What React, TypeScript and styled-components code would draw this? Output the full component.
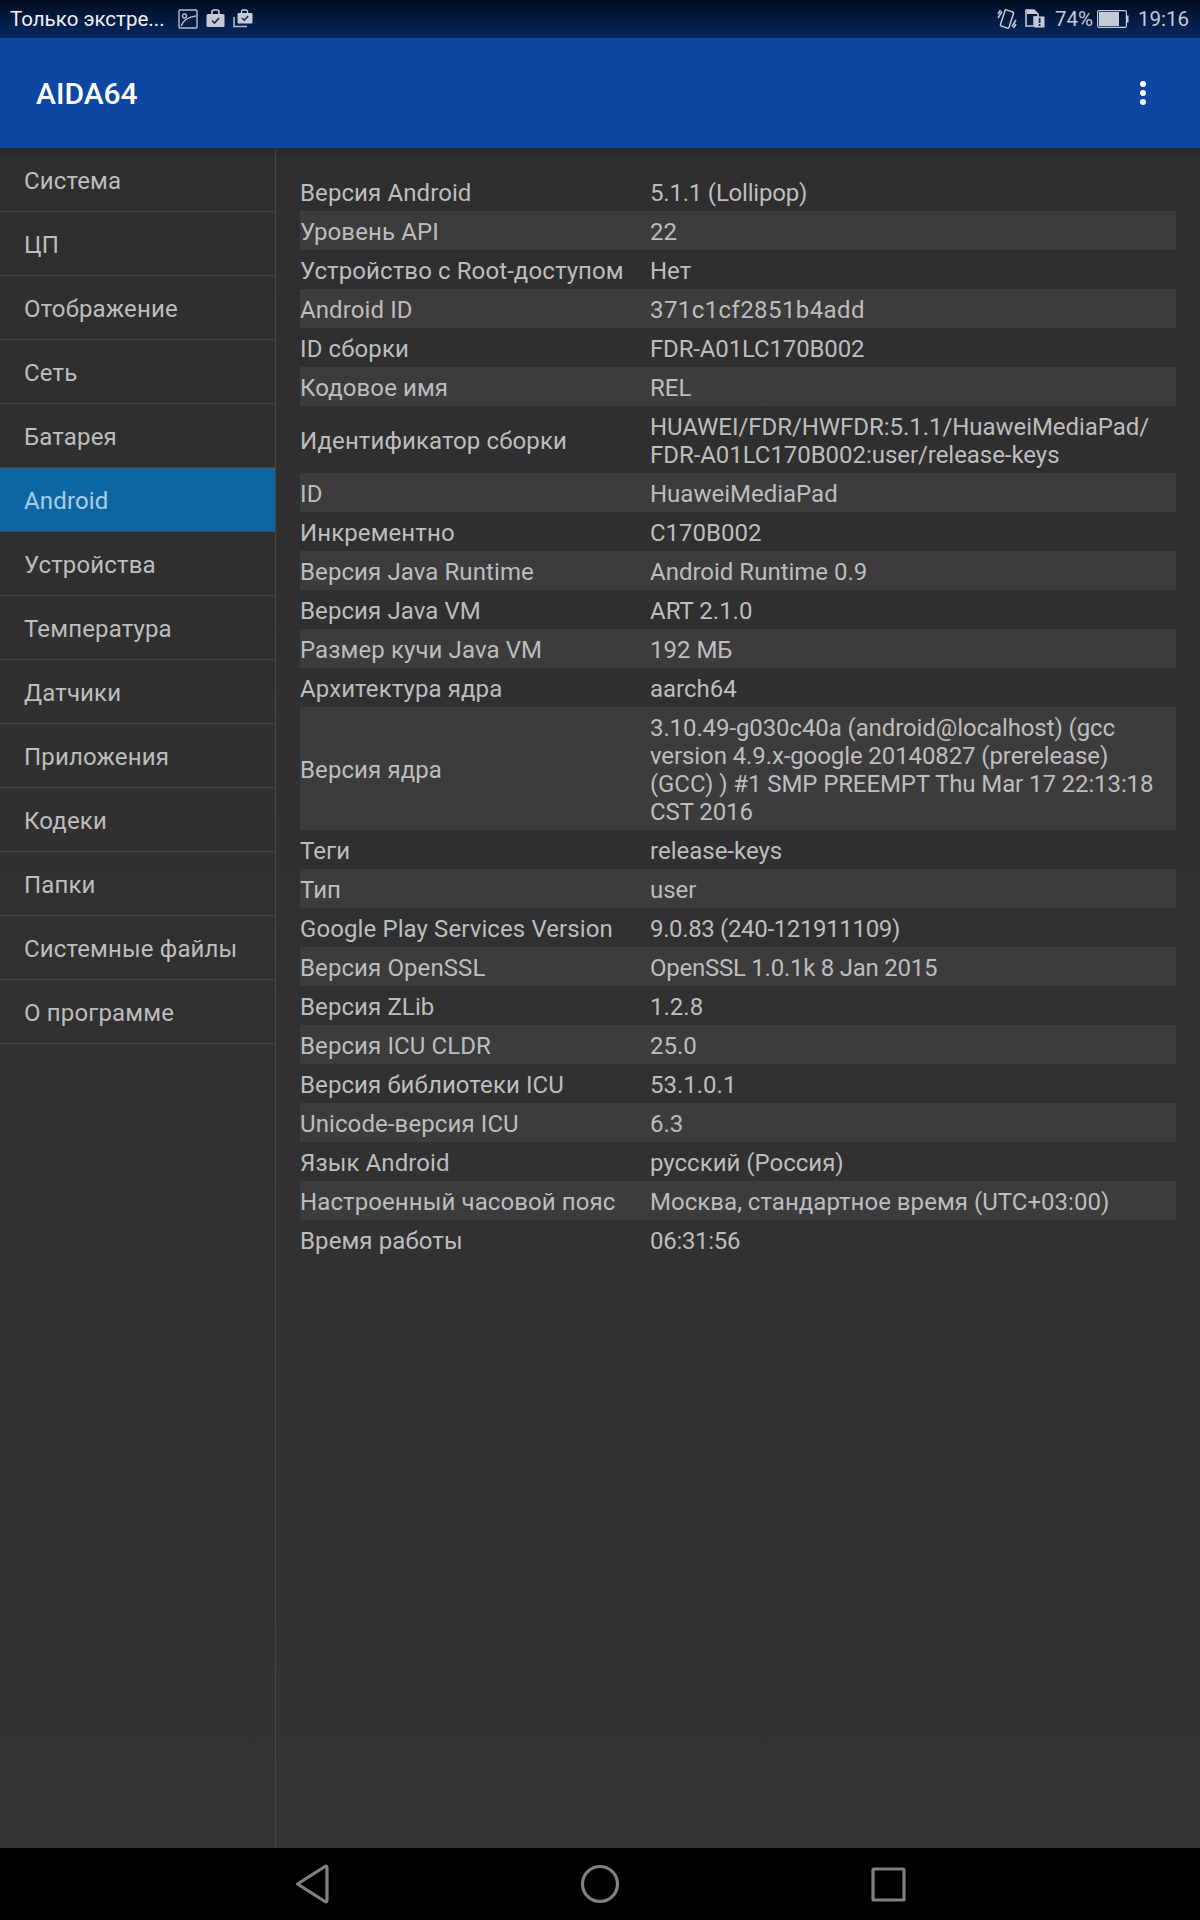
import { createGlobalStyle } from 'styled-components'
import styled from 'styled-components'

const GlobalStyle = createGlobalStyle`
    html, body {
        margin: 0;
        padding: 0;
        background: #303030;
    }
    * {
        box-sizing: border-box;
    }
`

const Page = styled.div`
    display: flex;
    flex-flow: column;
    width: 1200px;
    height: 1920px;
    font-family: Roboto, "Noto Sans", sans-serif;
    background: linear-gradient(#2e2e2e, #333333);
    overflow: hidden;
`

const StatusBar = styled.div`
    display: flex;
    align-items: center;
    height: 38px;
    padding: 0 10px;
    background: linear-gradient(#010c20, #072863);
    color: #c5cad6;
    font-size: 20.5px;
    flex: none;
`

const StatusTitle = styled.div`
    color: #eef0f4;
    margin-right: 13px;
`

const StatusIcons = styled.div`
    display: flex;
    align-items: center;
    gap: 8px;
`

const StatusRight = styled.div`
    display: flex;
    align-items: center;
    margin-left: auto;
    padding-right: 1px;
`

const Percent = styled.span`
    margin: 0 4px 0 10px;
`

const Clock = styled.span`
    margin-left: 9px;
`

const AppBar = styled.div`
    position: relative;
    display: flex;
    align-items: center;
    justify-content: space-between;
    height: 110px;
    padding: 0 54px 0 36px;
    background: #0d47a1;
    color: white;
    font-size: 30px;
    font-weight: 500;
    flex: none;
    box-shadow: 0 3px 10px rgba(0, 0, 0, 0.22);
`

const Dots = styled.div`
    display: flex;
    flex-flow: column;
    gap: 3px;
`

const Dot = styled.span`
    width: 6px;
    height: 6px;
    border-radius: 50%;
    background: white;
`

const Main = styled.div`
    flex: 1;
    display: flex;
    min-height: 0;
`

const Sidebar = styled.div`
    width: 276px;
    flex: none;
    border-right: 1px solid #464646;
`

const MenuItem = styled.div<{ $active?: boolean }>`
    display: flex;
    align-items: center;
    height: 64px;
    padding: 3px 0 0 24px;
    font-size: 24px;
    letter-spacing: 0.15px;
    color: ${(p) => (p.$active ? '#a9cde6' : '#bdbdbd')};
    background: ${(p) => (p.$active ? '#0d66a2' : 'transparent')};
    border-bottom: 1px solid #464646;
`

const Content = styled.div`
    flex: 1;
    padding: 24px 24px 0 24px;
`

const Row = styled.div`
    display: grid;
    grid-template-columns: 350px 1fr;
    align-items: center;
    padding: 6.5px 0 4.5px;
    font-size: 24px;
    line-height: 28px;
    color: #bdbdbd;

    &:nth-child(even) {
        background: #3c3c3c;
    }
`

const Label = styled.div`
    letter-spacing: 0.1px;
`

const Value = styled.div<{ $spacing?: number }>`
    white-space: pre-line;
    letter-spacing: ${(p) => p.$spacing ?? 0}px;
`

const NavBar = styled.div`
    display: flex;
    align-items: center;
    justify-content: center;
    gap: 244px;
    height: 72px;
    flex: none;
    background: #000;
`

const NavIcon = styled.svg`
    display: block;
    width: 44px;
    height: 44px;
    fill: none;
    stroke: #808080;
    stroke-width: 3.2;
    stroke-linejoin: round;
`

const Spacer = styled.span`
    width: 8px;
`

const menu = [
    'Система',
    'ЦП',
    'Отображение',
    'Сеть',
    'Батарея',
    'Android',
    'Устройства',
    'Температура',
    'Датчики',
    'Приложения',
    'Кодеки',
    'Папки',
    'Системные файлы',
    'О программе',
]

const rows: [string, string, number?][] = [
    ['Версия Android', '5.1.1 (Lollipop)', -0.2],
    ['Уровень API', '22'],
    ['Устройство с Root-доступом', 'Нет'],
    ['Android ID', '371c1cf2851b4add', 0.4],
    ['ID сборки', 'FDR-A01LC170B002', -0.15],
    ['Кодовое имя', 'REL'],
    ['Идентификатор сборки', 'HUAWEI/FDR/HWFDR:5.1.1/HuaweiMediaPad/\nFDR-A01LC170B002:user/release-keys', -0.05],
    ['ID', 'HuaweiMediaPad'],
    ['Инкрементно', 'C170B002'],
    ['Версия Java Runtime', 'Android Runtime 0.9'],
    ['Версия Java VM', 'ART 2.1.0'],
    ['Размер кучи Java VM', '192 МБ'],
    ['Архитектура ядра', 'aarch64'],
    ['Версия ядра', '3.10.49-g030c40a (android@localhost) (gcc\nversion 4.9.x-google 20140827 (prerelease)\n(GCC) ) #1 SMP PREEMPT Thu Mar 17 22:13:18\nCST 2016', -0.1],
    ['Теги', 'release-keys'],
    ['Тип', 'user'],
    ['Google Play Services Version', '9.0.83 (240-121911109)', -0.35],
    ['Версия OpenSSL', 'OpenSSL 1.0.1k 8 Jan 2015', -0.25],
    ['Версия ZLib', '1.2.8'],
    ['Версия ICU CLDR', '25.0'],
    ['Версия библиотеки ICU', '53.1.0.1'],
    ['Unicode-версия ICU', '6.3'],
    ['Язык Android', 'русский (Россия)'],
    ['Настроенный часовой пояс', 'Москва, стандартное время (UTC+03:00)', 0.03],
    ['Время работы', '06:31:56', -0.3],
]

const PictureIcon = () => (
    <svg width="20" height="20" viewBox="0 0 20 20" fill="none" stroke="#b4bccb" strokeWidth="1.4">
        <rect x="1" y="1" width="18" height="18" rx="1" />
        <circle cx="6.5" cy="7" r="2" />
        <path d="M3 17 C6 10 11 8 18 7" />
    </svg>
)

const WorkIcon = () => (
    <svg width="19" height="20" viewBox="0 0 19 20">
        <path d="M6 5V3a2 2 0 0 1 2-2h3a2 2 0 0 1 2 2v2" fill="none" stroke="#c5cad6" strokeWidth="1.6" />
        <rect x="0.5" y="5" width="18" height="13" rx="1.5" fill="#c5cad6" />
        <path d="M6 11.5l2.5 2.5 4.5-5" fill="none" stroke="#0a2a60" strokeWidth="1.6" />
    </svg>
)

const WorkStackIcon = () => (
    <svg width="20" height="20" viewBox="0 0 20 20">
        <path d="M1 8v9.5h13" fill="none" stroke="#b4bccb" strokeWidth="1.6" />
        <path d="M8.5 4V2.5a1.5 1.5 0 0 1 1.5-1.5h3a1.5 1.5 0 0 1 1.5 1.5V4" fill="none" stroke="#c5cad6" strokeWidth="1.4" />
        <rect x="4.5" y="4" width="15" height="10.5" rx="1" fill="#c5cad6" />
        <path d="M9 9l2.2 2.2 4-4.2" fill="none" stroke="#0a2a60" strokeWidth="1.5" />
    </svg>
)

const VibrateIcon = () => (
    <svg width="20" height="22" viewBox="0 0 20 22" fill="none" stroke="#c5cad6" strokeWidth="1.5">
        <rect x="5.5" y="2.5" width="9" height="17" rx="1.2" transform="rotate(18 10 11)" />
        <path d="M1 6l2.5-4M1 10l4-6.5M15 18.5l4-6.5M16.5 20l2.5-4" />
    </svg>
)

const SimAlertIcon = () => (
    <svg width="20" height="20" viewBox="0 0 20 20">
        <path d="M1 1h8l4 4v3H9v9H1z" fill="none" stroke="#c5cad6" strokeWidth="1.6" />
        <path d="M2 1h7l4 4H2z" fill="#c5cad6" />
        <rect x="9.5" y="7.5" width="10" height="11" fill="#c5cad6" />
        <rect x="13.7" y="9" width="1.8" height="5" fill="#0a2a60" />
        <rect x="13.7" y="15" width="1.8" height="2" fill="#0a2a60" />
    </svg>
)

const BatteryIcon = () => (
    <svg width="32" height="18" viewBox="0 0 32 18">
        <rect x="0.6" y="0.6" width="28.8" height="16.8" rx="1.5" fill="none" stroke="#c5cad6" strokeWidth="1.2" />
        <rect x="2" y="2" width="20" height="14" fill="#c5cad6" />
        <rect x="30" y="5.5" width="1.5" height="7" fill="#c5cad6" />
    </svg>
)

const App = () => {
    return (
        <Page>
            <GlobalStyle />
            <StatusBar>
                <StatusTitle>Только экстре...</StatusTitle>
                <StatusIcons>
                    <PictureIcon />
                    <WorkIcon />
                    <WorkStackIcon />
                </StatusIcons>
                <StatusRight>
                    <VibrateIcon />
                    <Spacer />
                    <SimAlertIcon />
                    <Percent>74%</Percent>
                    <BatteryIcon />
                    <Clock>19:16</Clock>
                </StatusRight>
            </StatusBar>

            <AppBar>
                <div>AIDA64</div>
                <Dots>
                    <Dot />
                    <Dot />
                    <Dot />
                </Dots>
            </AppBar>

            <Main>
                <Sidebar>
                    {menu.map((item) => (
                        <MenuItem key={item} $active={item === 'Android'}>
                            {item}
                        </MenuItem>
                    ))}
                </Sidebar>
                <Content>
                    {rows.map(([label, value, spacing]) => (
                        <Row key={label}>
                            <Label>{label}</Label>
                            <Value $spacing={spacing}>{value}</Value>
                        </Row>
                    ))}
                </Content>
            </Main>

            <NavBar>
                <NavIcon viewBox="0 0 44 44">
                    <path d="M7.5 22 L35 4.5 Q37 3.5 37 6 V38 Q37 40.5 35 39.5 Z" />
                </NavIcon>
                <NavIcon viewBox="0 0 44 44">
                    <circle cx="22" cy="22" r="17.5" />
                </NavIcon>
                <NavIcon viewBox="0 0 44 44">
                    <rect x="7" y="7" width="31" height="31" rx="1" />
                </NavIcon>
            </NavBar>
        </Page>
    )
}

export default App
